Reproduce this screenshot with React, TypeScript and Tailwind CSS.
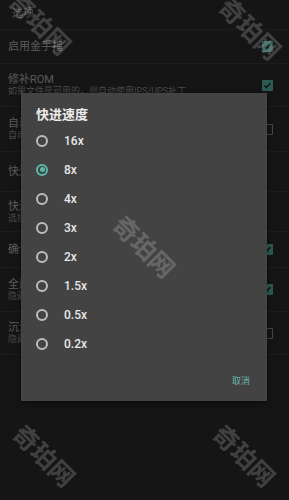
import React from 'react';

type Row = { title: string; sub?: string; check?: 'on' | 'off'; h: string };

const rows: Row[] = [
  { title: '启用金手指', check: 'on', h: 'h-[34px]' },
  { title: '修补ROM', sub: '如果文件是可用的，则自动使用IPS/UPS补丁', check: 'on', h: 'h-[43px]' },
  { title: '自动存档', sub: '自动保存游戏进度', check: 'off', h: 'h-[45px]' },
  { title: '快进', h: 'h-[40px]' },
  { title: '快进速度', sub: '选择快进速度', h: 'h-[40px]' },
  { title: '确认退出', check: 'on', h: 'h-[36px]' },
  { title: '全屏', sub: '隐藏状态栏', check: 'on', h: 'h-[44px]' },
  { title: '沉浸模式', sub: '隐藏导航栏', check: 'off', h: 'h-[43px]' },
];

const speeds = ['16x', '8x', '4x', '3x', '2x', '1.5x', '0.5x', '0.2x'];

function Check({ state }: { state: 'on' | 'off' }) {
  if (state === 'on') {
    return (
      <div className="w-[11px] h-[11px] rounded-[1px] bg-[#2d5a53] flex items-center justify-center">
        <svg width="9" height="9" viewBox="0 0 24 24" fill="none" stroke="#141414" strokeWidth="4">
          <path d="M4 12l5 5L20 6" />
        </svg>
      </div>
    );
  }
  return <div className="w-[11px] h-[11px] rounded-[1px] border-[1.5px] border-[#474747]" />;
}

function Watermark({ className }: { className: string }) {
  return (
    <div
      className={`absolute rotate-45 text-[25px] font-bold leading-none whitespace-nowrap text-white/20 pointer-events-none ${className}`}
    >
      奇珀网
    </div>
  );
}

export default function App() {
  return (
    <div
      className="relative w-full h-[500px] overflow-hidden bg-[#151515]"
      style={{ fontFamily: 'Roboto, "Noto Sans CJK SC", sans-serif' }}
    >
      <div className="h-[30px] flex items-center px-[12px] text-[11px] text-[#4a4a4a] border-b border-[#1d1d1d]">
        选项
      </div>
      {rows.map((r) => (
        <div key={r.title} className={`${r.h} flex items-center justify-between pl-[8px] pr-[16px] border-b border-[#1d1d1d]`}>
          <div className="flex flex-col">
            <span className="text-[11px] leading-[13px] text-[#5c5c5c]">{r.title}</span>
            {r.sub && <span className="text-[9px] leading-[11px] text-[#4a4a4a]">{r.sub}</span>}
          </div>
          {r.check && <Check state={r.check} />}
        </div>
      ))}

      <div className="absolute left-[21px] top-[93px] w-[246px] h-[308px] bg-[#434343] flex flex-col shadow-[0_2px_6px_rgba(0,0,0,0.5)]">
        <div className="pl-[15px] pt-[14px] h-[33px] text-[13px] leading-[16px] font-bold text-[#ececec]">快进速度</div>
        <div className="flex flex-col">
          {speeds.map((s) => {
            const sel = s === '8x';
            return (
              <div key={s} className="h-[29px] flex items-center pl-[15px] gap-[16px]">
                <div
                  className={`w-[12px] h-[12px] rounded-full border-2 flex items-center justify-center ${
                    sel ? 'border-[#5cb8aa]' : 'border-[#bdbdbd]'
                  }`}
                >
                  {sel && <div className="w-[5px] h-[5px] rounded-full bg-[#5cb8aa]" />}
                </div>
                <span className="text-[12px] font-medium text-[#e8e8e8]">{s}</span>
              </div>
            );
          })}
        </div>
        <div className="flex-1 flex items-center justify-end pr-[17px] pt-[4px]">
          <span className="text-[9px] text-[#6cb3a8]">取消</span>
        </div>
      </div>

      <Watermark className="left-[2px] top-[12px]" />
      <Watermark className="left-[212px] top-[17px]" />
      <Watermark className="left-[106px] top-[235px]" />
      <Watermark className="left-[6px] top-[444px]" />
      <Watermark className="left-[206px] top-[444px]" />
    </div>
  );
}
